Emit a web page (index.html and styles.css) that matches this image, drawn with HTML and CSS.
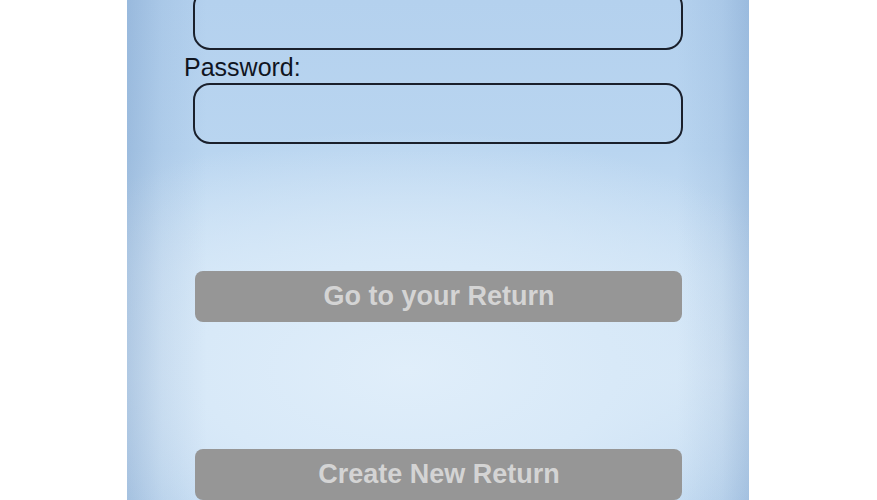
FILE: index.html
```html
<!DOCTYPE html>
<html lang="en">
<head>
<meta charset="utf-8">
<title>Login</title>
<link rel="stylesheet" href="styles.css">
</head>
<body>
<div class="screen">
  <div class="form">
    <input class="field field-first" type="text" aria-label="Username">
    <label class="label">Password:</label>
    <input class="field" type="password" aria-label="Password">
    <button class="btn btn-go" type="button">Go to your Return</button>
    <button class="btn btn-create" type="button">Create New Return</button>
  </div>
</div>
</body>
</html>
```
FILE: styles.css
```css
html, body {
  margin: 0;
  padding: 0;
  background: #ffffff;
  height: 100%;
  overflow: hidden;
}
body {
  font-family: "Liberation Sans", Arial, sans-serif;
}
.screen {
  margin-left: 127px;
  width: 622px;
  height: 500px;
  overflow: hidden;
  background:
    linear-gradient(to right, rgba(95,135,185,0.32) 0px, rgba(95,135,185,0.12) 35px, rgba(95,135,185,0) 80px, rgba(95,135,185,0) 550px, rgba(95,135,185,0.12) 595px, rgba(95,135,185,0.3) 622px),
    radial-gradient(ellipse 460px 240px at 45% 74%, #e0eefa 0%, #d8e9f8 45%, rgba(205,226,245,0) 100%),
    linear-gradient(to bottom, #b4d1ee 0%, #b9d5f0 30%, #cde2f5 55%, #d4e6f6 75%, #bcd6ef 100%);
}
.form {
  display: flex;
  flex-direction: column;
  align-items: flex-start;
  padding-left: 57px;
}
.field {
  display: block;
  box-sizing: border-box;
  width: 490px;
  height: 61px;
  margin: 0 0 0 9px;
  border: 2px solid #1a202c;
  border-radius: 17px;
  background: transparent;
  outline: none;
  appearance: none;
  -webkit-appearance: none;
}
.field-first {
  margin-top: -11px;
}
.label {
  display: block;
  margin-top: 3px;
  margin-bottom: 2px;
  font-size: 25px;
  line-height: 28px;
  color: #10151f;
}
.btn {
  display: flex;
  align-items: center;
  justify-content: center;
  box-sizing: border-box;
  width: 487px;
  height: 51px;
  margin-left: 11px;
  padding: 0 0 0 1px;
  border: none;
  border-radius: 8px;
  background: #969696;
  color: #d4d4d4;
  font-family: "Liberation Sans", Arial, sans-serif;
  font-weight: bold;
  font-size: 27px;
  line-height: 1;
  appearance: none;
  -webkit-appearance: none;
}
.btn-go {
  margin-top: 127px;
}
.btn-create {
  margin-top: 127px;
}
```
